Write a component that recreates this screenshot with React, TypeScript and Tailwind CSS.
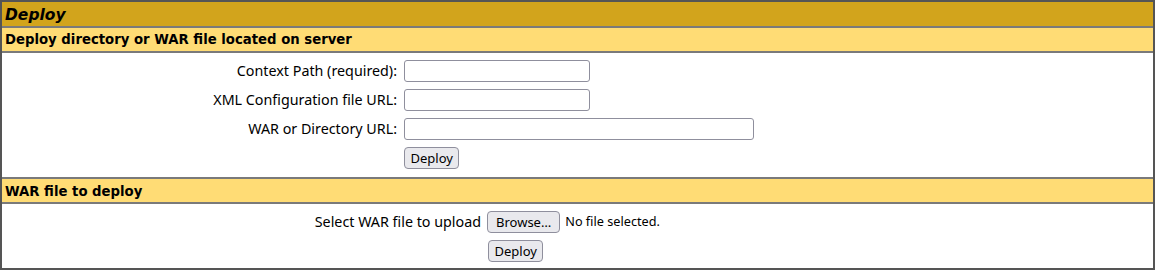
import React from "react";

const head = "font-['DejaVu_Sans',sans-serif] font-bold text-black";
const body = "font-['Noto_Sans',sans-serif] text-[14.3px] text-black";
const sep = "border-t-2 border-t-[#7a7a7a]";

const Field = ({ w }: { w: string }) => (
  <input
    type="text"
    className={`${w} h-[22px] rounded-[3px] border border-[#8f8f9d] bg-white px-1 outline-none`}
  />
);

const Btn = ({ label, px = "px-[5.5px]" }: { label: string; px?: string }) => (
  <button className={`h-[22px] rounded-[4px] border border-[#8f8f9d] bg-[#e9e9ed] ${px} leading-[20px] text-[13px]`}>
    {label}
  </button>
);

export default function App() {
  return (
    <div className="w-[1155px] h-[272px] bg-white">
      <div className="w-[1155px] border-2 border-[#555] box-border">
        {/* 标题 */}
        <div className={`${head} h-[24px] bg-[#d2a41c] pl-[3px] pt-px text-[15.5px] italic leading-[24px]`}>
          Deploy
        </div>
        <div className={`${sep} ${head} h-[25px] bg-[#ffdc75] pl-[3px] text-[13.25px] leading-[23px]`}>
          Deploy directory or WAR file located on server
        </div>

        {/* 服务器上的目录 */}
        <div className={`${sep} ${body} h-[126px] pt-[7px]`}>
          <div className="grid grid-cols-[395px_auto] items-center gap-x-[7px] gap-y-[7px]">
            <span className="text-right">Context Path (required):</span>
            <Field w="w-[186px]" />
            <span className="text-right">XML Configuration file URL:</span>
            <Field w="w-[186px]" />
            <span className="text-right">WAR or Directory URL:</span>
            <Field w="w-[350px]" />
            <span />
            <div>
              <Btn label="Deploy" />
            </div>
          </div>
        </div>

        <div className={`${sep} ${head} h-[25px] bg-[#ffdc75] pl-[3px] pt-px text-[13.25px] leading-[23px]`}>
          WAR file to deploy
        </div>

        {/* 上传 WAR */}
        <div className={`${sep} ${body} h-[66px] pt-[7px]`}>
          <div className="grid grid-cols-[479px_auto] items-center gap-x-[6px] gap-y-[7px]">
            <span className="text-right">Select WAR file to upload</span>
            <div className="flex items-center gap-[5px]">
              <Btn label="Browse…" px="px-[8px]" />
              <span className="text-[12.7px]">No file selected.</span>
            </div>
            <span />
            <div className="pl-px">
              <Btn label="Deploy" />
            </div>
          </div>
        </div>
      </div>
    </div>
  );
}
